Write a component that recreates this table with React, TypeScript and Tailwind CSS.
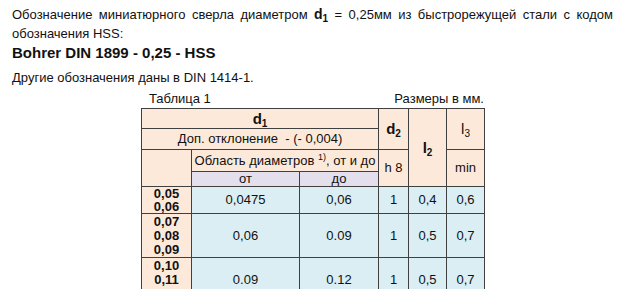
import React from 'react';

const font = { fontFamily: '"Liberation Sans", Arial, sans-serif' };

const cell = 'border border-[#404040] text-center align-middle p-0';
const peach = 'bg-[#fde9d9]';
const lilac = 'bg-[#e4dfec]';
const blue = 'bg-[#daeef3]';

function Sub({ base, sub, className = '' }: { base: string; sub: string; className?: string }) {
  return (
    <span className={`font-bold leading-none ${className}`}>
      {base}
      <sub className="text-[10px] leading-none align-baseline relative top-[3px]">{sub}</sub>
    </span>
  );
}

const rows = [
  { d: ['0,05', '0,06'], from: '0,0475', to: '0,06', d2: '1', l2: '0,4', l3: '0,6', h: 'h-[27px]', lh: 'leading-[13px]' },
  { d: ['0,07', '0,08', '0,09'], from: '0,06', to: '0.09', d2: '1', l2: '0,5', l3: '0,7', h: 'h-[44px]', lh: 'leading-[14px]' },
  { d: ['0,10', '0,11', '0,12'], from: '0.09', to: '0.12', d2: '1', l2: '0,5', l3: '0,7', h: 'h-[44px]', lh: 'leading-[14px]' },
];

export default function App() {
  return (
    <div className="w-[625px] h-[289px] overflow-hidden bg-white text-[#111]" style={font}>
      <div className="px-[12px] pt-[5px]">
        {/* Intro */}
        <p className="text-[13px] leading-[19px] text-justify [text-align-last:left]">
          Обозначение миниатюрного сверла диаметром <Sub base="d" sub="1" className="text-[14px]" /> = 0,25мм из
          быстрорежущей стали с кодом обозначения HSS:
        </p>
        <p className="mt-[1px] text-[15px] leading-[18px] font-bold">Bohrer DIN 1899 - 0,25 - HSS</p>
        <p className="mt-[7px] text-[13px] leading-[18px]">Другие обозначения даны в DIN 1414-1.</p>
      </div>

      {/* Table */}
      <div className="w-[343px] mx-auto mt-[3px]">
        <div className="flex justify-between text-[13px] leading-[17px] pl-[8px] pb-[1px]">
          <span>Таблица 1</span>
          <span>Размеры в мм.</span>
        </div>
        <table className="table-fixed border-collapse w-[343px] text-[13px] leading-[14px]">
          <colgroup>
            <col className="w-[50px]" />
            <col className="w-[108px]" />
            <col className="w-[79px]" />
            <col className="w-[30px]" />
            <col className="w-[38px]" />
            <col className="w-[38px]" />
          </colgroup>
          <thead>
            <tr className="h-[20px]">
              <td colSpan={3} className={`${cell} ${peach}`}>
                <Sub base="d" sub="1" className="text-[15px]" />
              </td>
              <td rowSpan={2} className={`${cell} ${peach}`}>
                <Sub base="d" sub="2" className="text-[15px]" />
              </td>
              <td rowSpan={4} className={`${cell} ${peach}`}>
                <Sub base="l" sub="2" className="text-[15px]" />
              </td>
              <td rowSpan={2} className={`${cell} ${peach}`}>
                <span className="text-[15px] leading-none">
                  l<sub className="text-[10px] leading-none align-baseline relative top-[3px]">3</sub>
                </span>
              </td>
            </tr>
            <tr className="h-[21px]">
              <td colSpan={3} className={`${cell} ${peach}`}>
                Доп. отклонение&nbsp; - (- 0,004)
              </td>
            </tr>
            <tr className="h-[22px]">
              <td rowSpan={2} className={`${cell} ${peach}`}></td>
              <td colSpan={2} className={`${cell} ${peach}`}>
                Область диаметров <sup className="text-[9px] leading-none align-baseline relative -top-[5px]">1)</sup>, от и до
              </td>
              <td rowSpan={2} className={`${cell} ${peach}`}>h 8</td>
              <td rowSpan={2} className={`${cell} ${peach}`}>min</td>
            </tr>
            <tr className="h-[15px]">
              <td className={`${cell} ${lilac}`}>от</td>
              <td className={`${cell} ${lilac}`}>до</td>
            </tr>
          </thead>
          <tbody>
            {rows.map((r, i) => (
              <tr key={i} className={r.h}>
                <td className={`${cell} ${peach} font-bold ${r.lh}`}>
                  {r.d.map((v) => (
                    <div key={v}>{v}</div>
                  ))}
                </td>
                <td className={`${cell} ${blue}`}>{r.from}</td>
                <td className={`${cell} ${blue}`}>{r.to}</td>
                <td className={`${cell} ${blue}`}>{r.d2}</td>
                <td className={`${cell} ${blue}`}>{r.l2}</td>
                <td className={`${cell} ${blue}`}>{r.l3}</td>
              </tr>
            ))}
          </tbody>
        </table>
      </div>
    </div>
  );
}
